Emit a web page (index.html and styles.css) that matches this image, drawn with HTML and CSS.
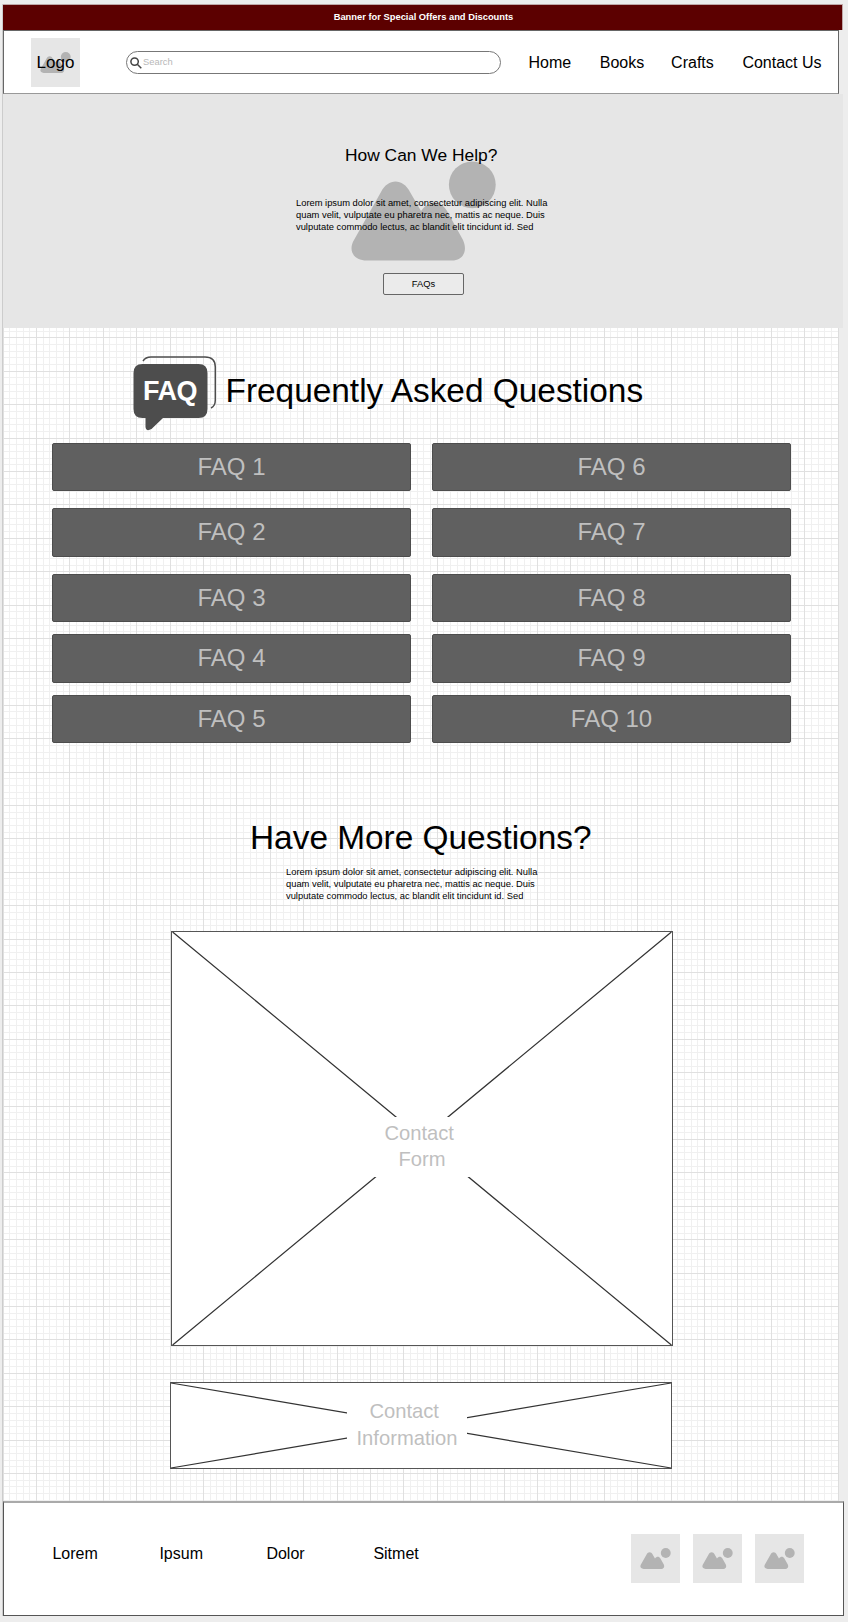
FILE: index.html
```html
<!DOCTYPE html>
<html lang="en">
<head>
<meta charset="utf-8">
<title>FAQ</title>
<link rel="stylesheet" href="styles.css">
</head>
<body>
<svg class="defs" width="0" height="0">
  <symbol id="picture" viewBox="0 0 145 100">
    <path d="M3 79 L30 31 C37 17 52 17 59 31 L70 50 C77 40 89 38 96 50 L112 79 C117 90 112 99.500 101 99.500 H16 C2 99.500 -3 89 3 79Z"/>
    <circle cx="121.300" cy="23.800" r="23.400"/>
  </symbol>
</svg>
<div class="page">
  <div class="banner">Banner for Special Offers and Discounts</div>
  <header class="header">
    <div class="logo"><svg class="thumb-icon"><use href="#picture"/></svg><span class="logo-text">Logo</span></div>
    <div class="search">
      <svg class="search-icon" viewBox="0 0 12 12"><circle cx="4.600" cy="4.600" r="3.700"/><path d="M7.300 7.300 L11.300 11.300"/></svg>
      <span>Search</span>
    </div>
    <nav class="nav"><a>Home</a><a>Books</a><a>Crafts</a><a>Contact Us</a></nav>
  </header>
  <section class="hero">
    <svg class="hero-picture"><use href="#picture"/></svg>
    <h1 class="hero-title">How Can We Help?</h1>
    <p class="copy hero-copy">Lorem ipsum dolor sit amet, consectetur adipiscing elit. Nulla<br>quam velit, vulputate eu pharetra nec, mattis ac neque. Duis<br>vulputate commodo lectus, ac blandit elit tincidunt id. Sed</p>
    <div class="button">FAQs</div>
  </section>
  <main class="main">
    <div class="faq-head">
      <svg class="faq-icon" viewBox="0 0 84 76">
        <path class="faq-outline" d="M10 6 Q12.500 2 18 2 H72 Q82.300 2 82.300 12 V45 Q82.300 51 78 53"/>
        <path class="faq-bubble" d="M9.500 9 H65.500 Q74.500 9 74.500 18 V54 Q74.500 63 65.500 63 H30 L18.500 74 Q13 77 12.500 72 V63 H9.500 Q.5 63 .5 54 V18 Q.5 9 9.500 9Z"/>
        <text class="faq-label" x="10" y="45" textLength="54.500">FAQ</text>
      </svg>
      <h2 class="heading">Frequently Asked Questions</h2>
    </div>
    <div class="faq-grid">
      <div class="faq">FAQ 1</div><div class="faq">FAQ 6</div>
      <div class="faq">FAQ 2</div><div class="faq">FAQ 7</div>
      <div class="faq">FAQ 3</div><div class="faq">FAQ 8</div>
      <div class="faq">FAQ 4</div><div class="faq">FAQ 9</div>
      <div class="faq">FAQ 5</div><div class="faq">FAQ 10</div>
    </div>
    <h2 class="heading more-title">Have More Questions?</h2>
    <p class="copy more-copy">Lorem ipsum dolor sit amet, consectetur adipiscing elit. Nulla<br>quam velit, vulputate eu pharetra nec, mattis ac neque. Duis<br>vulputate commodo lectus, ac blandit elit tincidunt id. Sed</p>
    <div class="placeholder form">
      <svg class="cross" viewBox="0 0 500 414"><path d="M0 0 L500 414 M500 0 L0 414"/></svg>
      <div class="placeholder-text form-text">Contact&nbsp;<br>Form</div>
    </div>
    <div class="placeholder info">
      <svg class="cross" viewBox="0 0 500 85"><path d="M0 0 L500 85 M500 0 L0 85"/></svg>
      <div class="placeholder-text info-text">Contact&nbsp;<br>Information</div>
    </div>
  </main>
  <footer class="footer">
    <div class="links"><a>Lorem</a><a>Ipsum</a><a>Dolor</a><a>Sitmet</a></div>
    <div class="thumbs">
      <div class="thumb"><svg class="thumb-icon"><use href="#picture"/></svg></div>
      <div class="thumb"><svg class="thumb-icon"><use href="#picture"/></svg></div>
      <div class="thumb"><svg class="thumb-icon"><use href="#picture"/></svg></div>
    </div>
  </footer>
</div>
</body>
</html>
```
FILE: styles.css
```css
* { box-sizing: border-box; }
body { margin: 0; background: #ededed; color: #000; font-family: "Liberation Sans", Arial, sans-serif; }
h1, h2, p { margin: 0; font-weight: 400; }
.defs { display: block; }
.page { margin: 4px 4px 0 2px; border-left: 1px solid #ccc; height: 1612px; }

.banner { width: 840px; height: 26px; background: #5c0000; border: 1px solid #bfa8a8; border-bottom: 0; border-left: 0; color: #fff; font-weight: 700; font-size: 9.36px; line-height: 24px; text-align: center; padding-left: 2px; }

.header { width: 836px; height: 64px; background: #fff; border: 1px solid #666; border-bottom-color: #999; display: flex; align-items: flex-start; padding-left: 27px; }
.logo, .thumb { width: 49px; height: 49px; background: #e6e6e6; position: relative; flex: none; }
.logo { margin-top: 7px; display: flex; justify-content: center; }
.thumb-icon { position: absolute; left: 9px; top: 14px; width: 31px; height: 21px; fill: #b3b3b3; }
.logo-text { position: relative; font-size: 17px; line-height: 49px; }
.search { margin: 20px 0 0 46px; width: 375px; height: 23px; border: 1px solid #777; border-radius: 12px; display: flex; align-items: center; font-size: 9.36px; color: #b8b8b8; padding: 0 0 2px 3px; gap: 1px; }
.search-icon { width: 12px; height: 12px; fill: none; stroke: #444; stroke-width: 1.5; margin-top: 2px; }
.nav { display: grid; grid-template-columns: repeat(3, 71.3px) auto; margin: 22px 0 0 27.5px; font-size: 16px; line-height: 20px; white-space: nowrap; }

.hero { position: relative; width: 840px; height: 234px; background: #e6e6e6; display: flex; flex-direction: column; align-items: flex-start; }
.hero-picture { position: absolute; left: 348px; top: 67px; width: 145px; height: 100px; fill: #b3b3b3; }
.hero-title { position: relative; margin: 51px 0 0 342px; font-size: 17.4px; line-height: 20px; }
.copy { font-size: 9.36px; line-height: 12px; white-space: nowrap; }
.hero-copy { position: relative; margin: 32px 0 0 293px; }
.button { margin: 40px 0 0 380px; width: 81px; height: 22px; border: 1px solid #666; border-radius: 2px; background: #ebebeb; font-size: 9.36px; line-height: 20px; text-align: center; }

.main { width: 836px; height: 1173px; border-right: 1px solid #ddd; background:
  repeating-linear-gradient(90deg, #e0e0e0 0 .6px, transparent .6px 33px, #e0e0e0 33px 33.4px),
  repeating-linear-gradient(180deg, transparent 0 9.4px, #e0e0e0 9.4px 10.4px, transparent 10.4px 33.4px),
  repeating-linear-gradient(90deg, #f0f0f0 0 .6px, transparent .6px 6.28px, #f0f0f0 6.28px 6.68px),
  repeating-linear-gradient(180deg, transparent 0 2.72px, #f0f0f0 2.72px 3.72px, transparent 3.72px 6.68px),
  #fff; }
.faq-head { display: flex; padding: 27px 0 0 130px; height: 115px; }
.faq-icon { width: 84px; height: 76px; }
.faq-outline { fill: none; stroke: #4d4d4d; stroke-width: 1.5; }
.faq-bubble { fill: #4d4d4d; }
.faq-label { fill: #fff; font-weight: 700; font-size: 27px; }
.heading { font-size: 33.4px; line-height: 40px; white-space: nowrap; }
.faq-head .heading { margin: 16px 0 0 8.5px; }
.faq-grid { display: grid; grid-template-columns: 359px 359px; column-gap: 21px; grid-template-rows: 65.4px 65.4px 60.6px 60.6px 48.4px; margin-left: 49px; }
.faq { height: 48.4px; background: #606060; border: 1px solid #4d4d4d; border-radius: 2px; color: #bfbfbf; font-size: 24px; line-height: 45px; text-align: center; }
.more-title { margin: 74.600px 0 0 247px; }
.more-copy { margin: 8px 0 0 283px; }
.placeholder { position: relative; background: #fff; border: 1px solid #555; display: flex; justify-content: center; align-items: center; }
.cross { position: absolute; left: 0; top: 0; width: 100%; height: 100%; overflow: visible; fill: none; stroke: #333; stroke-width: 1.200; }
.placeholder-text { position: relative; background: #fff; color: #bfbfbf; font-size: 20.200px; text-align: center; }
.form { width: 502px; height: 415px; margin: 29px 0 0 168px; }
.form-text { width: 120px; height: 60px; padding-top: 3px; line-height: 26px; margin-top: 17px; }
.info { width: 502px; height: 87px; margin: 36px 0 0 167px; justify-content: flex-start; }
.info-text { margin-left: 176px; width: 120px; height: 60px; padding-top: 3px; line-height: 26.6px; }

.footer { width: 841px; height: 115px; background: #fff; border: 1px solid #555; border-top: 2px solid #aaa; display: flex; }
.links { display: grid; grid-template-columns: repeat(4, 107px); margin: 41px 0 0 48.4px; font-size: 16px; line-height: 20px; }
.thumbs { display: flex; gap: 13px; margin: 31px 0 0 151px; }
```
